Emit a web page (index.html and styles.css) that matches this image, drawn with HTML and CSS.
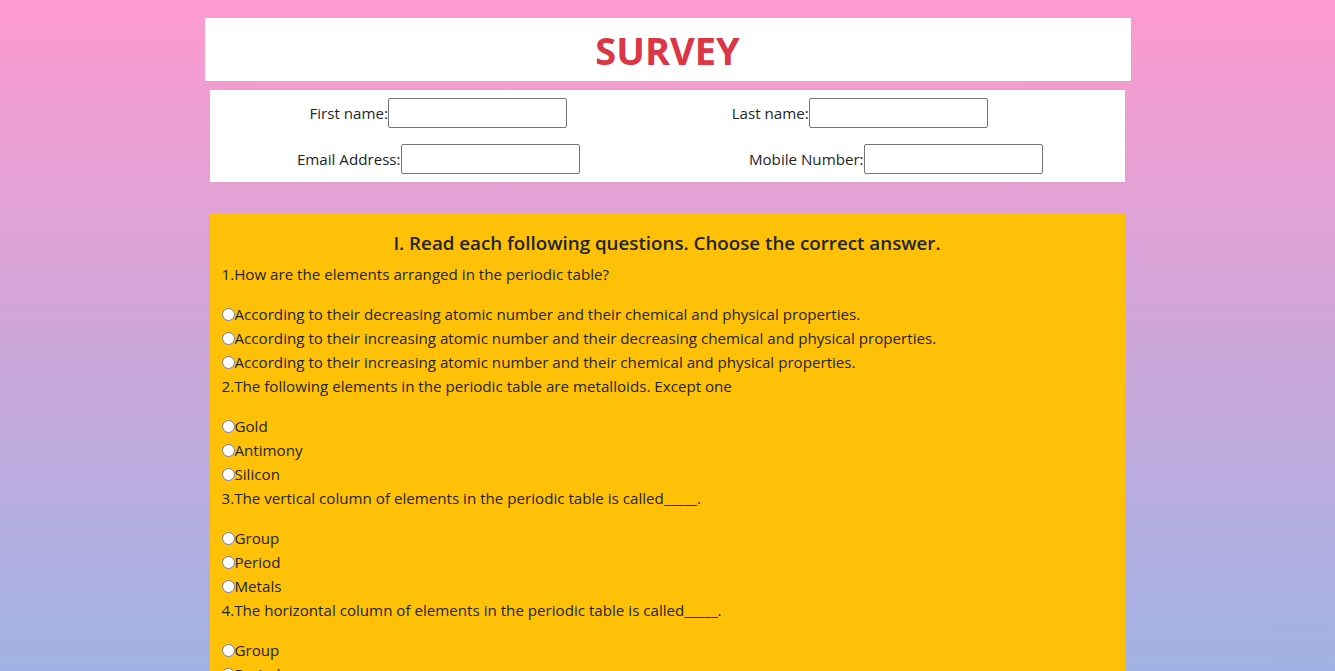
FILE: index.html
```html
<!DOCTYPE html>
<html lang="en">
<head>
<meta charset="utf-8">
<title>Survey</title>
<link rel="stylesheet" href="styles.css">
</head>
<body>
<div class="container">
  <header class="title-box"><h1>SURVEY</h1></header>
  <section class="info">
    <div class="cell"><label>First name:</label><input type="text"></div>
    <div class="cell shift"><label>Last name:</label><input type="text"></div>
    <div class="cell"><label>Email Address:</label><input type="text"></div>
    <div class="cell"><label>Mobile Number:</label><input type="text"></div>
  </section>
  <section class="quiz">
    <h2>I. Read each following questions. Choose the correct answer.</h2>
    <p class="q">1.How are the elements arranged in the periodic table?</p>
    <label class="opt"><input type="radio" name="q1">According to their decreasing atomic number and their chemical and physical properties.</label>
    <label class="opt"><input type="radio" name="q1">According to their increasing atomic number and their decreasing chemical and physical properties.</label>
    <label class="opt"><input type="radio" name="q1">According to their increasing atomic number and their chemical and physical properties.</label>
    <p class="q">2.The following elements in the periodic table are metalloids. Except one</p>
    <label class="opt"><input type="radio" name="q2">Gold</label>
    <label class="opt"><input type="radio" name="q2">Antimony</label>
    <label class="opt"><input type="radio" name="q2">Silicon</label>
    <p class="q">3.The vertical column of elements in the periodic table is called_____.</p>
    <label class="opt"><input type="radio" name="q3">Group</label>
    <label class="opt"><input type="radio" name="q3">Period</label>
    <label class="opt"><input type="radio" name="q3">Metals</label>
    <p class="q">4.The horizontal column of elements in the periodic table is called_____.</p>
    <label class="opt"><input type="radio" name="q4">Group</label>
    <label class="opt"><input type="radio" name="q4">Period</label>
    <label class="opt"><input type="radio" name="q4">Metals</label>
  </section>
</div>
</body>
</html>
```
FILE: styles.css
```css
html {
  min-height: 100%;
}
body {
  margin: 0;
  min-height: 100vh;
  background: linear-gradient(to bottom, #fd9ad0, #a0b3e4) fixed;
  font-family: "Open Sans", "Noto Sans", sans-serif;
  font-size: 15.15px;
  line-height: 24px;
  color: #212529;
}
.container {
  width: 926px;
  margin: 0 auto;
  padding-top: 18px;
}
.title-box {
  background: #fff;
  height: 63px;
  display: flex;
  align-items: center;
  justify-content: center;
}
.title-box h1 {
  margin: 0;
  font-size: 38px;
  line-height: 48px;
  font-weight: 700;
  color: #dc3545;
}
.info {
  margin: 9px 6px 0 5px;
  background: #fff;
  display: grid;
  grid-template-columns: 1fr 1fr;
  grid-auto-rows: 46px;
}
.cell {
  display: flex;
  align-items: center;
  justify-content: center;
}
.cell.shift {
  padding-right: 72px;
}
.cell input {
  width: 179px;
  height: 30px;
  box-sizing: border-box;
  border: 1px solid #767676;
  border-radius: 2px;
  margin: 0;
  padding: 1px 2px;
  background: #fff;
}
.quiz {
  margin: 32px 6px 0 5px;
  background: #ffc107;
  padding: 17px 12px 20px 12px;
}
.quiz h2 {
  margin: 0 0 7px 0;
  font-size: 18.75px;
  line-height: 24px;
  font-weight: 600;
  text-align: center;
}
.q {
  margin: 0 0 16px 0;
}
.opt {
  display: block;
}
.opt input {
  margin: 0;
  width: 13px;
  height: 13px;
  vertical-align: -1px;
}
```
